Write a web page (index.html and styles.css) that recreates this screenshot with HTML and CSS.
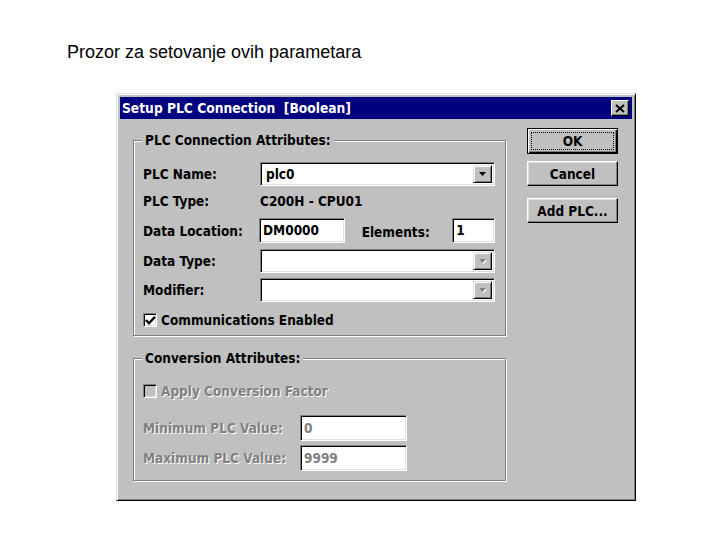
FILE: index.html
```html
<!DOCTYPE html>
<html>
<head>
<meta charset="utf-8">
<link rel="stylesheet" href="styles.css">
</head>
<body>
<h1 class="caption">Prozor za setovanje ovih parametara</h1>
<div class="dialog">
  <div class="titlebar">
    <span class="title">Setup PLC Connection&nbsp; [Boolean]</span>
    <span class="close"><svg width="10" height="9" viewBox="0 0 10 9"><path d="M1 1 L9 8 M9 1 L1 8" stroke="#000" stroke-width="2"/></svg></span>
  </div>
  <div class="main">
    <div class="groups">
      <div class="group g1">
        <span class="legend">PLC Connection Attributes:</span>
        <div class="row r-name">
          <span class="label">PLC Name:</span>
          <div class="combo"><span class="val">plc0</span><span class="drop"><svg width="7" height="4" viewBox="0 0 7 4"><path d="M0 0 H7 L3.5 4 Z" fill="#000"/></svg></span></div>
        </div>
        <div class="row r-type">
          <span class="label">PLC Type:</span>
          <span class="static">C200H - CPU01</span>
        </div>
        <div class="row r-loc">
          <span class="label">Data Location:</span>
          <div class="field f-loc">DM0000</div>
          <span class="label2">Elements:</span>
          <div class="field f-el">1</div>
        </div>
        <div class="row r-dtype">
          <span class="label">Data Type:</span>
          <div class="combo"><span class="val"></span><span class="drop"><svg width="8" height="5" viewBox="0 0 8 5"><path d="M1 1 H8 L4.5 5 Z" fill="#fff"/><path d="M0 0 H7 L3.5 4 Z" fill="#808080"/></svg></span></div>
        </div>
        <div class="row r-mod">
          <span class="label">Modifier:</span>
          <div class="combo"><span class="val"></span><span class="drop"><svg width="8" height="5" viewBox="0 0 8 5"><path d="M1 1 H8 L4.5 5 Z" fill="#fff"/><path d="M0 0 H7 L3.5 4 Z" fill="#808080"/></svg></span></div>
        </div>
        <div class="row r-chk">
          <span class="check"><svg width="11" height="11" viewBox="0 0 11 11"><path d="M1 5 L4 8.2 L10 1.8" fill="none" stroke="#000" stroke-width="2.4"/></svg></span>
          <span class="chk-label">Communications Enabled</span>
        </div>
      </div>
      <div class="group g2">
        <span class="legend">Conversion Attributes:</span>
        <div class="row r-apply">
          <span class="check disabled"></span>
          <span class="chk-label dis">Apply Conversion Factor</span>
        </div>
        <div class="row r-min">
          <span class="label wide dis">Minimum PLC Value:</span>
          <div class="field f-val dis-field">0</div>
        </div>
        <div class="row r-max">
          <span class="label wide dis">Maximum PLC Value:</span>
          <div class="field f-val dis-field">9999</div>
        </div>
      </div>
    </div>
    <div class="buttons">
      <div class="btn btn-default"><span class="focus">OK</span></div>
      <div class="btn btn-cancel">Cancel</div>
      <div class="btn btn-add">Add PLC...</div>
    </div>
  </div>
</div>
</body>
</html>
```
FILE: styles.css
```css
body {
  margin: 0;
  background: #fff;
}

.caption {
  margin: 0;
  padding: 42px 0 0 67px;
  font: 400 18px/21px "Liberation Sans", Arial, sans-serif;
  color: #000;
}

.dialog {
  box-sizing: border-box;
  width: 520px;
  height: 408px;
  margin: 30px 0 0 116px;
  padding: 3px;
  background: #c0c0c0;
  border: 1px solid;
  border-color: #dfdfdf #000 #000 #dfdfdf;
  box-shadow: inset 1px 1px #fff, inset -1px -1px #808080;
  font: 700 13.5px/16px "DejaVu Sans Condensed", "DejaVu Sans", sans-serif;
  color: #000;
}

.titlebar {
  height: 22px;
  box-sizing: border-box;
  background: #000080;
  color: #fff;
  font-size: 13.7px;
  display: flex;
  align-items: center;
  justify-content: space-between;
  padding: 0 3px 0 2px;
}

.close {
  box-sizing: border-box;
  width: 18px;
  height: 16px;
  background: #c0c0c0;
  border: 1px solid;
  border-color: #fff #000 #000 #fff;
  box-shadow: inset -1px -1px #808080;
  display: flex;
  align-items: center;
  justify-content: center;
}

.main {
  display: flex;
  gap: 21px;
  padding-left: 13px;
}

.groups {
  width: 373px;
}

.group {
  position: relative;
  box-sizing: border-box;
  width: 373px;
  border: 1px solid #808080;
  box-shadow: 1px 1px #fff, inset 1px 1px #fff;
  padding: 0 10px 0 9px;
}

.legend {
  position: absolute;
  top: -9px;
  left: 8px;
  padding: 0 3px;
  background: #c0c0c0;
  line-height: 16px;
}

.g1 {
  margin-top: 21px;
  height: 196px;
  padding-top: 21px;
}

.g2 {
  margin-top: 22px;
  height: 123px;
  padding-top: 25px;
}

.row {
  display: flex;
  align-items: center;
}

.label {
  width: 117px;
  flex: none;
}

.label.wide {
  width: 157px;
}

.r-name { height: 24px; }
.r-type { height: 30px; }
.r-loc { height: 25px; margin-top: 2px; }
.r-dtype { height: 24px; margin-top: 6px; }
.r-mod { height: 24px; margin-top: 5px; }
.r-chk { height: 14px; margin-top: 11px; }

.r-apply { height: 14px; }
.r-min { height: 26px; margin-top: 17px; }
.r-max { height: 26px; margin-top: 4px; }

.combo {
  box-sizing: border-box;
  width: 235px;
  height: 100%;
  background: #fff;
  border: 1px solid;
  border-color: #808080 #fff #fff #808080;
  box-shadow: inset 1px 1px #000, inset -1px -1px #dfdfdf;
  display: flex;
  align-items: center;
  justify-content: space-between;
  padding: 2px 2px 2px 5px;
}

.drop {
  box-sizing: border-box;
  width: 19px;
  height: 100%;
  background: #c0c0c0;
  border: 1px solid;
  border-color: #dfdfdf #000 #000 #dfdfdf;
  box-shadow: inset 1px 1px #fff, inset -1px -1px #808080;
  display: flex;
  align-items: center;
  justify-content: center;
}

.field {
  box-sizing: border-box;
  height: 100%;
  background: #fff;
  border: 1px solid;
  border-color: #808080 #fff #fff #808080;
  box-shadow: inset 1px 1px #000, inset -1px -1px #dfdfdf;
  padding: 2px 3px 0 3px;
  line-height: 18px;
}

.f-loc {
  width: 86px;
  margin-left: -1px;
}

.label2 {
  width: 91px;
  margin-left: 17px;
  padding-top: 2px;
}

.f-el {
  width: 43px;
}

.f-val {
  width: 107px;
  padding-top: 3px;
}

.dis-field {
  color: #808080;
}

.check {
  box-sizing: border-box;
  width: 14px;
  height: 14px;
  flex: none;
  background: #fff;
  border: 1px solid;
  border-color: #808080 #fff #fff #808080;
  box-shadow: inset 1px 1px #000, inset -1px -1px #dfdfdf;
  display: flex;
  align-items: center;
  justify-content: center;
}

.check.disabled {
  background: #c0c0c0;
}

.chk-label {
  margin-left: 4px;
}

.dis {
  color: #808080;
  text-shadow: 1px 1px #fff;
}

.buttons {
  display: flex;
  flex-direction: column;
  width: 91px;
}

.btn {
  box-sizing: border-box;
  height: 25px;
  border: 1px solid;
  border-color: #fff #000 #000 #fff;
  box-shadow: inset -1px -1px #808080, inset 1px 1px #dfdfdf;
  display: flex;
  align-items: center;
  justify-content: center;
}

.btn-default {
  height: 26px;
  margin-top: 9px;
  border: 1px solid #000;
  box-shadow: inset 1px 1px #fff, inset -1px -1px #000, inset -2px -2px #808080;
  padding: 3px;
}

.focus {
  flex: 1;
  align-self: stretch;
  border: 1px dotted #000;
  display: flex;
  align-items: center;
  justify-content: center;
}

.btn-cancel {
  margin-top: 7px;
}

.btn-add {
  margin-top: 12px;
}
```
